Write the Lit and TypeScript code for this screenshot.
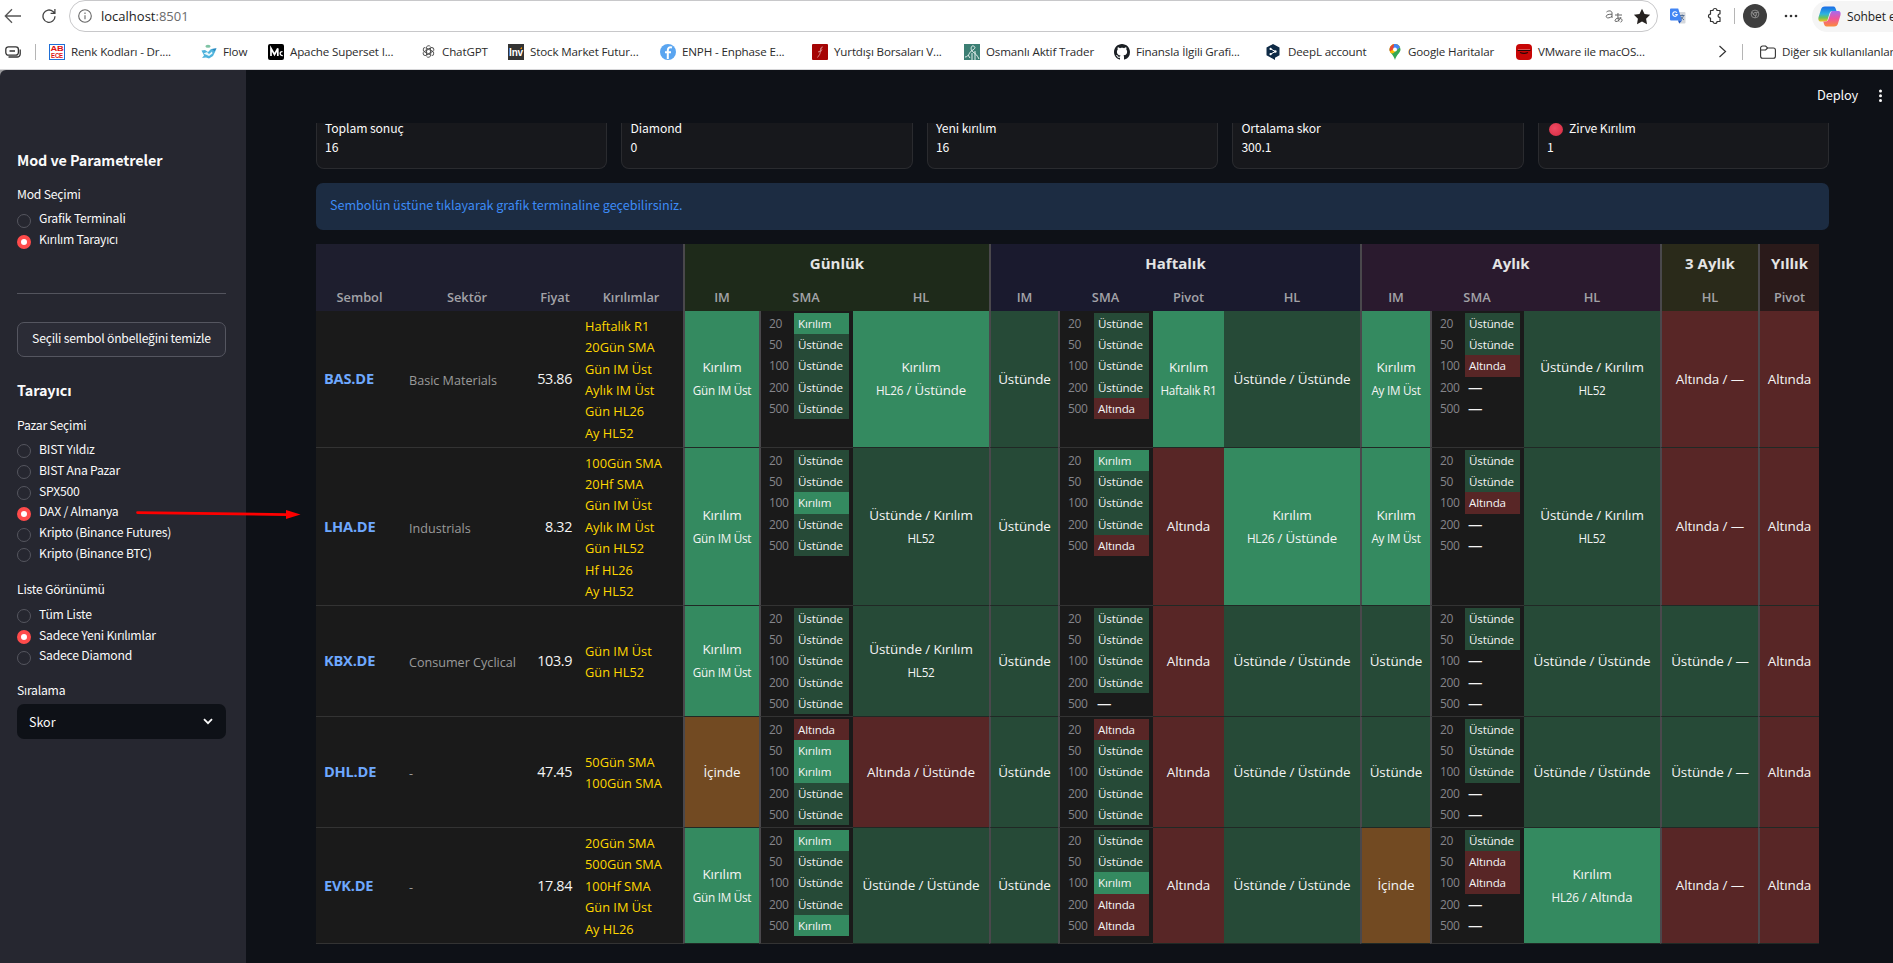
import { LitElement, html, css, svg, nothing, TemplateResult } from "lit";
import { customElement } from "lit/decorators.js";
import { classMap } from "lit/directives/class-map.js";

const ICONS: Record<string, TemplateResult> = {
  abece: svg`<svg width="16" height="16" viewBox="0 0 16 16"><rect x=".5" y=".5" width="15" height="15" fill="#fff" stroke="#1f6fd6"/><text x="8" y="7.4" font-size="7" font-weight="700" fill="#e01212" text-anchor="middle" textLength="13" lengthAdjust="spacingAndGlyphs">AB</text><text x="8" y="14" font-size="6.4" font-weight="700" fill="#e01212" text-anchor="middle" textLength="12" lengthAdjust="spacingAndGlyphs">ECE</text></svg>`,
  flow: svg`<svg width="16" height="16" viewBox="0 0 16 16"><ellipse cx="7" cy="2.3" rx="2.6" ry="1.5" fill="#7fc3a4"/><path d="M.5 6.5 4 6l3 2 3-3 5.500-.500L14 8l-2 4-4 2.500-3-1-4 .500 2-2.500z" fill="#4fb3dc"/><path d="M2.500 9.500 6 8l2 2 3-2.500.500 2L8 12z" fill="#e9f7fc"/><path d="M11 5l4.500-.8-2 3z" fill="#2c86bd"/></svg>`,
  medium: svg`<svg width="16" height="16" viewBox="0 0 16 16"><rect width="16" height="16" rx="2" fill="#000"/><path d="M3 12V4.500l3.500 6 3.300-6V12" fill="none" stroke="#fff" stroke-width="1.700"/><path d="M14.500 7.600c-3-.5-3.300 4.200.300 4" fill="none" stroke="#fff" stroke-width="1.300"/></svg>`,
  gpt: svg`<svg width="13" height="13" viewBox="0 0 13 13" fill="none" stroke="#4a4a4a" stroke-width=".9">${[0, 60, 120, 180, 240, 300].map(
    (r) => svg`<path transform="rotate(${r} 6.500 6.500)" d="M4.300 5.300V2.900a2.300 2.300 0 0 1 4.200-1.200M4.300 2.900 8.400 5.300"/>`)}</svg>`,
  inv: svg`<svg width="16" height="16" viewBox="0 0 16 16"><rect width="16" height="16" fill="#333"/><text x="8" y="12" font-size="10.500" font-weight="700" fill="#fff" text-anchor="middle" textLength="14" lengthAdjust="spacingAndGlyphs">Inv</text><path d="M12 4.500l2-1.500v2z" fill="#f90"/></svg>`,
  fin: svg`<svg width="16" height="16" viewBox="0 0 16 16"><circle cx="8" cy="8" r="8" fill="#5aa5f0"/><path d="M12 3.500c-3-1-4.200.7-4.200 3V15M5 8.200h6" fill="none" stroke="#fff" stroke-width="2"/></svg>`,
  redf: svg`<svg width="16" height="16" viewBox="0 0 16 16"><rect width="16" height="16" rx="1" fill="#a50505"/><path d="M10.800 3C7.500 3 9 7.500 7.600 10.500L5.500 13.500M6 8l4-1.500M8.800 4.500l1.500 1" fill="none" stroke="#e0a8a8" stroke-width=".8"/></svg>`,
  osm: svg`<svg width="16" height="16" viewBox="0 0 16 16"><rect width="16" height="16" fill="#3c7f74"/><path d="M1 13c4 0 4-5 7-6.500S12 3 9.500 2 6 6 9 8s4 3 6 7M8 16V9m3 7V7M4 11l2 3" fill="none" stroke="#e6f1ef" stroke-width="1"/></svg>`,
  github: svg`<svg width="16" height="16" viewBox="0 0 16 16"><path fill="#1b1f24" d="M8 0C3.580 0 0 3.580 0 8c0 3.540 2.290 6.530 5.470 7.590.4.070.55-.17.55-.38 0-.19-.01-.82-.01-1.490-2.010.37-2.530-.49-2.690-.94-.09-.23-.48-.94-.82-1.130-.28-.15-.68-.52-.01-.53.63-.01 1.080.58 1.230.82.72 1.210 1.870.87 2.330.66.07-.52.28-.87.51-1.070-1.780-.2-3.640-.89-3.640-3.950 0-.87.31-1.590.82-2.150-.08-.2-.36-1.020.08-2.120 0 0 .67-.21 2.200.82.64-.18 1.320-.27 2-.27s1.360.09 2 .27c1.530-1.040 2.200-.82 2.200-.82.44 1.100.16 1.920.08 2.120.51.56.82 1.270.82 2.150 0 3.070-1.870 3.750-3.650 3.950.29.25.54.73.54 1.480 0 1.070-.01 1.930-.01 2.200 0 .21.15.46.55.38A8 8 0 0 0 16 8c0-4.420-3.580-8-8-8z"/></svg>`,
  deepl: svg`<svg width="14" height="16" viewBox="0 0 14 16"><path d="M7 0l6.500 3.600v7.600L9 13.700 9 16l-2.500-1.400L.5 11.200V3.600z" fill="#0f2b46"/><path d="M4.500 4.800l4.800 2.700-4.800 2.700" fill="none" stroke="#fff" stroke-width="1"/><circle cx="4.600" cy="4.900" r="1.100" fill="#fff"/><circle cx="9.400" cy="7.500" r="1.200" fill="#fff"/><circle cx="4.600" cy="10.200" r="1.100" fill="#fff"/></svg>`,
  maps: svg`<svg width="12" height="16" viewBox="0 0 12 16"><path d="M6 0a5.500 5.500 0 0 1 5.500 5.600C11.500 9 7.200 11 6 16 4.800 11 .5 9 .5 5.600A5.500 5.500 0 0 1 6 0z" fill="#34a853"/><path d="M6 0a5.500 5.500 0 0 1 5 3.200L4 9.500 1.500 9C-.5 5 1 0 6 0z" fill="#fbbc04"/><path d="M6 0 5 5.500 1.500 3C2.500 1 4 0 6 0z" fill="#ea4335"/><path d="M5 0c3-.300 5 1 6 3.200L8 6 4.500 4z" fill="#4285f4"/><path d="M1.600 2.400 4.500 5 1 7.500C.3 5.500.5 4 1.600 2.400z" fill="#ea4335"/><circle cx="6" cy="5.500" r="2" fill="#fff"/></svg>`,
  vm: svg`<svg width="16" height="16" viewBox="0 0 16 16"><rect width="16" height="16" rx="4" fill="#c80606"/><path d="M1.500 6.500h13M4 8.600c3 1.200 5 1.200 8 0" stroke="#2a0505" stroke-width="1.100" fill="none"/><path d="M2 5.500h12" stroke="#e08a8a" stroke-width=".6"/></svg>`,
};

const BOOKMARKS: [string, string, number, number][] = [
  ["abece", "Renk Kodları - Dr....", 152, 6],
  ["flow", "Flow", 67, 6],
  ["medium", "Apache Superset I...", 154, 6],
  ["gpt", "ChatGPT", 86, 7],
  ["inv", "Stock Market Futur...", 152, 6],
  ["fin", "ENPH - Enphase E...", 152, 6],
  ["redf", "Yurtdışı Borsaları V...", 152, 6],
  ["osm", "Osmanlı Aktif Trader", 150, 6],
  ["github", "Finansla İlgili Grafi...", 152, 6],
  ["deepl", "DeepL account", 123, 8],
  ["maps", "Google Haritalar", 127, 7],
  ["vm", "VMware ile macOS...", 150, 6],
];

const UI = css`"Open Sans", "Noto Sans", sans-serif`;
const SOURCE = css`"Noto Sans CJK SC", "Open Sans", sans-serif`;

@customElement("browser-bar")
export class BrowserBar extends LitElement {
  static styles = css`
    :host { display: block; height: 69px; background: #fff; border-bottom: 1px solid #d6d6d8; overflow: hidden; color: #2b2b2b; font-family: ${UI}; }
    svg { display: block; flex: none; }
    svg text { font-family: "Liberation Sans", sans-serif; }
    .row { display: flex; align-items: center; white-space: nowrap; }
    .nav { height: 32px; }
    .back { margin-left: 4px; }
    .reload { margin-left: 20px; }
    .address { box-sizing: border-box; flex: none; width: 1589px; height: 32px; margin-left: 13px; border: 1px solid #c8c8ca; border-radius: 16px; padding: 0 6px 0 8px; display: flex; align-items: center; }
    .url { margin-left: 9px; font-size: 13px; letter-spacing: 0; color: #1c1c1c; }
    .url span { color: #6b6b6b; }
    .grow { flex: 1; }
    .sep { width: 1px; height: 16px; background: #b5b5b5; flex: none; }
    .avatar { flex: none; width: 24px; height: 24px; border-radius: 50%; background: #3e3e3e; display: flex; align-items: center; justify-content: center; }
    .chat { flex: none; width: 100px; height: 31px; border-radius: 16px 0 0 16px; background: #f5f5f5; display: flex; align-items: center; gap: 6px; padding-left: 6px; font-size: 12px; letter-spacing: -0.1px; color: #222; }
    .marks { height: 37px; padding-top: 1px; font-size: 11.600px; letter-spacing: -0.15px; }
    .item { display: flex; align-items: center; flex: none; box-sizing: border-box; }
  `;
  render() {
    return html`
      <div class="row nav">
        <svg class="back" width="18" height="16" viewBox="0 0 18 16" fill="none" stroke="#555" stroke-width="1.300"><path d="M17 8H1.500M8 1.300 1.300 8 8 14.700"/></svg>
        <svg class="reload" width="14" height="16" viewBox="0 0 14 16" fill="none" stroke="#444" stroke-width="1.300"><path d="M13 8.200A6 6.200 0 1 1 11 3.600L12.800 5.200M12.900 1v4.300H8.600"/></svg>
        <div class="address">
          <svg width="14" height="14" viewBox="0 0 14 14" fill="none" stroke="#666" stroke-width="1.100"><circle cx="7" cy="7" r="6.300"/><path d="M7 6.200v4M7 3.600v1.300"/></svg>
          <div class="url">localhost<span>:8501</span></div>
          <div class="grow"></div>
          <svg width="18" height="16" viewBox="0 0 18 16" fill="none" stroke="#666" stroke-width="1"><path d="M1.500 4C3.500 2.300 7 2.500 7 5v5M7 6.300C4 6 1.200 6.800 1.200 8.400 1.200 10.500 5 10.500 7 8M10 7h7M13 5c-.3 4 0 6 1 8.500M16 9c-1 3-3 4.500-5 4.500-2 0-1-3.500 3-3.500 3.500 0 4 3.500 1.500 4.200"/></svg>
          <svg width="18" height="17" viewBox="0 0 18 17" style="margin-left:10px"><path d="M9 .8l2.500 5.100 5.600.8-4 4 .9 5.600L9 13.600l-5 2.700.9-5.600-4-4 5.600-.8z" fill="#262220"/></svg>
        </div>
        <svg style="margin-left:12px" width="16" height="16" viewBox="0 0 16 16"><path d="M6 4h8.500a1 1 0 0 1 1 1v9.500a1 1 0 0 1-1 1H9z" fill="#d4d7dc"/><path d="M1 .5h7.200L12 12.500H1a1 1 0 0 1-1-1v-10a1 1 0 0 1 1-1z" fill="#4285f4"/><path d="M8 12.500h4L9.300 15.500z" fill="#1a56c4"/><path d="M7 4.800A2.300 2.300 0 1 0 7.300 6.500H5.200" fill="none" stroke="#fff" stroke-width="1.100"/><path d="M10 7.500h4.500M12.200 6.500v1M13.500 7.500c-.5 2-1.500 3-2.500 3.800M11 8.500c.7 1.500 1.600 2.500 3 3.500" fill="none" stroke="#4d6a92" stroke-width=".9"/></svg>
        <svg style="margin-left:20px" width="17" height="18" viewBox="0 0 17 18" fill="none" stroke="#333" stroke-width="1.200" stroke-linejoin="round"><path d="M4.500 3.500H7a2 2 0 0 1 4 0h3v3.300a1.800 1.800 0 1 0 0 3.800V14.500H11a2 2 0 0 1-4 0H4.500v-3.300a2 2 0 0 1 0-4z"/></svg>
        <div class="sep" style="margin-left:11px"></div>
        <div class="avatar" style="margin-left:8px"><svg width="10" height="10" viewBox="0 0 10 10" style="margin-bottom:5px" fill="none" stroke="#999" stroke-width=".8"><circle cx="5" cy="5" r="3.900"/><circle cx="5" cy="5" r="1.500"/><path d="M5 3.400h3.500M3.700 6 2 3M6.300 6 4.800 8.800"/></svg></div>
        <svg style="margin-left:17px" width="14" height="4" viewBox="0 0 14 4" fill="#333"><circle cx="2" cy="2" r="1.300"/><circle cx="7" cy="2" r="1.300"/><circle cx="12" cy="2" r="1.300"/></svg>
        <div class="chat" style="margin-left:14px">
          <svg width="23" height="21" viewBox="0 0 23 21"><defs><linearGradient id="a" x1="0" y1="0" x2="0" y2="1"><stop offset="0" stop-color="#1b6ce8"/><stop offset=".5" stop-color="#2db3e0"/><stop offset=".75" stop-color="#6cc35a"/><stop offset="1" stop-color="#f5c322"/></linearGradient><linearGradient id="b" x1="0" y1="0" x2="0" y2="1"><stop offset="0" stop-color="#a46bf0"/><stop offset=".5" stop-color="#f0559a"/><stop offset="1" stop-color="#fb8b3a"/></linearGradient></defs><path d="M7 .5h8.500c1.500 0 2 1.500 2.500 3l.5 1.500h-4c-2 0-2.500 1-3 2.500L9.500 14C9 15 8.500 15.500 7 15.500H3C.5 15.500 0 13.500.6 11L3 3.500C3.600 1.500 4.500.5 7 .5z" fill="url(#a)"/><path d="M16 20.500H8.500c-1.500 0-2-1-2.500-2.500L5.300 15.500H7.500c2 0 2.500-1 3-2.500L12.500 7c.5-1.500 1-2 2.500-2h5c2.500 0 3 2 2.400 4.500L20 17.500c-.6 2-1.500 3-4 3z" fill="url(#b)"/></svg>
          <span>Sohbet e</span>
        </div>
      </div>
      <div class="row marks">
        <svg style="margin-left:5px" width="16" height="12" viewBox="0 0 16 12" fill="none" stroke="#333" stroke-width="1.300"><rect x=".8" y=".8" width="12.600" height="8.400" rx="2.600"/><path d="M4.500 5h5.500M3.500 11h8.500a3 3 0 0 0 3.200-3V3.500"/></svg>
        <div class="sep" style="margin-left:14px"></div>
        <div style="width:13px;flex:none"></div>
        ${BOOKMARKS.map(([icon, text, w, gap]) => html`<div class="item" style="width:${w}px;gap:${gap}px">${ICONS[icon]}<span>${text}</span></div>`)}
        <svg style="margin-left:52px" width="9" height="13" viewBox="0 0 9 13" fill="none" stroke="#333" stroke-width="1.200"><path d="M1.500 1l6 5.500-6 5.500"/></svg>
        <div class="sep" style="margin-left:15px"></div>
        <svg style="margin:0 6px 0 17px" width="16" height="14" viewBox="0 0 16 14" fill="none" stroke="#333" stroke-width="1.100"><path d="M.6 3a2 2 0 0 1 2-2h3l2 2h5.800a2 2 0 0 1 2 2v6.300a2 2 0 0 1-2 2H2.600a2 2 0 0 1-2-2zM.6 5h5l2-2"/></svg>
        <span>Diğer sık kullanılanlar</span>
      </div>`;
  }
}

@customElement("side-panel")
export class SidePanel extends LitElement {
  static styles = css`
    :host { display: block; box-sizing: border-box; width: 246px; flex: none; padding: 78px 20px 0 17px; background: #262730; border-top-left-radius: 6px; color: #fafafa; font-family: ${SOURCE}; white-space: nowrap; }
    h2 { margin: 0; height: 24px; line-height: 24px; font-size: 14.400px; font-weight: 700; letter-spacing: -0.1px; }
    .label, .opt, .btn { font-size: 12.200px; letter-spacing: -0.22px; }
    .label { height: 20px; line-height: 20px; }
    .opts { padding-top: 4px; }
    .opt { display: flex; align-items: center; gap: 8px; height: 20.800px; line-height: 20px; }
    .dot { box-sizing: border-box; width: 14px; height: 14px; border-radius: 50%; border: 1px solid #55565f; background: #262730; margin-top: 5px; }
    .dot.on { border: 4.500px solid #ff4b4b; background: #fff; }
    .rule { height: 1px; background: #53545d; margin: 43px 0 28px; }
    .btn { box-sizing: border-box; height: 35px; border: 1px solid #555660; border-radius: 7px; background: #2b2c36; text-align: center; line-height: 31px; }
    .select { height: 35px; margin-top: 4px; border-radius: 7px; background: #0e1117; display: flex; align-items: center; justify-content: space-between; padding: 0 13px 0 12px; font-size: 12.500px; }
  `;
  private group(items: string[], on: number) {
    return html`<div class="opts">${items.map((t, i) => html`<div class="opt"><i class=${classMap({ dot: true, on: i === on })}></i><span>${t}</span></div>`)}</div>`;
  }
  render() {
    return html`
      <h2>Mod ve Parametreler</h2>
      <div class="label" style="margin-top:12px">Mod Seçimi</div>
      ${this.group(["Grafik Terminali", "Kırılım Tarayıcı"], 1)}
      <div class="rule"></div>
      <div class="btn">Seçili sembol önbelleğini temizle</div>
      <h2 style="margin-top:21px">Tarayıcı</h2>
      <div class="label" style="margin-top:13px">Pazar Seçimi</div>
      ${this.group(["BIST Yıldız", "BIST Ana Pazar", "SPX500", "DAX / Almanya", "Kripto (Binance Futures)", "Kripto (Binance BTC)"], 3)}
      <div class="label" style="margin-top:16px">Liste Görünümü</div>
      ${this.group(["Tüm Liste", "Sadece Yeni Kırılımlar", "Sadece Diamond"], 1)}
      <div class="label" style="margin-top:14px">Sıralama</div>
      <div class="select"><span>Skor</span><svg width="10" height="7" viewBox="0 0 10 7" fill="none" stroke="#fafafa" stroke-width="1.800"><path d="M1 1.200l4 4 4-4"/></svg></div>`;
  }
}

type State = "k" | "u" | "a" | "i" | "-";
interface Cell { s: State; t: string; sub?: string; tail?: string }
interface Row { sym: string; sector: string; price: string; hits: string[]; h: number; cells: (Cell | string)[] }

const NAMES: Record<string, string> = { k: "Kırılım", u: "Üstünde", a: "Altında", i: "İçinde", "-": "—" };
const c = (s: State, t = NAMES[s], sub?: string, tail?: string): Cell => ({ s, t, sub, tail });
const kg = c("k", "Kırılım", "Gün IM Üst");
const ka = c("k", "Kırılım", "Ay IM Üst");
const uu = c("u", "Üstünde / Üstünde");
const uk = c("u", "Üstünde / Kırılım", "HL52");
const kHL = c("k", "Kırılım", "HL26", "/ Üstünde");
const aDash = c("a", "Altında / —");
const uDash = c("u", "Üstünde / —");
const u = c("u"), a = c("a"), inside = c("i");

const ROWS: Row[] = [
  { sym: "BAS.DE", sector: "Basic Materials", price: "53.86", h: 137, hits: ["Haftalık R1", "20Gün SMA", "Gün IM Üst", "Aylık IM Üst", "Gün HL26", "Ay HL52"],
    cells: [kg, "kuuuu", kHL, u, "uuuua", c("k", "Kırılım", "Haftalık R1"), uu, ka, "uua--", uk, aDash, a] },
  { sym: "LHA.DE", sector: "Industrials", price: "8.32", h: 158, hits: ["100Gün SMA", "20Hf SMA", "Gün IM Üst", "Aylık IM Üst", "Gün HL52", "Hf HL26", "Ay HL52"],
    cells: [kg, "uukuu", uk, u, "kuuua", a, kHL, ka, "uua--", uk, aDash, a] },
  { sym: "KBX.DE", sector: "Consumer Cyclical", price: "103.9", h: 111, hits: ["Gün IM Üst", "Gün HL52"],
    cells: [kg, "uuuuu", uk, u, "uuuu-", a, uu, u, "uu---", uu, uDash, a] },
  { sym: "DHL.DE", sector: "-", price: "47.45", h: 111, hits: ["50Gün SMA", "100Gün SMA"],
    cells: [inside, "akkuu", c("a", "Altında / Üstünde"), u, "auuuu", a, uu, u, "uuu--", uu, uDash, a] },
  { sym: "EVK.DE", sector: "-", price: "17.84", h: 116, hits: ["20Gün SMA", "500Gün SMA", "100Hf SMA", "Gün IM Üst", "Ay HL26"],
    cells: [kg, "kuuuk", uu, u, "uukaa", a, uu, inside, "uaa--", c("k", "Kırılım", "HL26", "/ Altında"), aDash, a] },
];
const PERIODS = [20, 50, 100, 200, 500];
const DIVIDED = new Set([0, 1, 3, 4, 7, 8, 10, 11]);

@customElement("scan-table")
export class ScanTable extends LitElement {
  static styles = css`
    :host { display: block; width: 1503px; color: #f4f4f4; font-family: ${UI}; white-space: nowrap; }
    .grid { display: grid; grid-template-columns: 85px 130px 46px 106px 76px 94px 136px 69px 95px 71px 136px 70px 94px 136px 98px 61px; }
    .top { display: grid; grid-template-columns: 367px 306px 371px 300px 98px 61px; height: 39px; font-weight: 700; font-size: 15px; line-height: 39px; text-align: center; color: #e4e4e4; }
    .heads { height: 28px; font-size: 12.800px; font-weight: 600; line-height: 28px; text-align: center; color: #a3a3a8; }
    .base { background: #1e1e2e; padding-left: 2px; }
    .day { background: #1e2a1a; }
    .week { background: #1a1a2e; }
    .month { background: #2a1a2e; }
    .quarter { background: #2a2a1a; }
    .year { background: #2a1a1a; }
    .bar { border-left: 2px solid #4a484c; }
    .row > div { box-sizing: border-box; border-bottom: 1px solid #333; background-color: #1a1a1a; display: flex; align-items: center; min-width: 0; }
    .row .sym { padding: 0 0 2px 8px; font-size: 14.600px; font-weight: 700; letter-spacing: -0.2px; color: #6ea8fe; }
    .row .sector { padding: 3px 0 0 8px; font-size: 12.600px; letter-spacing: 0; color: #9a9a9a; }
    .row .price { justify-content: flex-end; padding: 0 5px 1px 0; font-size: 14.400px; letter-spacing: -0.38px; }
    .row .hits { padding: 2px 0 0 8px; font-size: 12.800px; line-height: 21.400px; color: #ffd700; }
    .row .cell { flex-direction: column; justify-content: center; font-size: 13.450px; letter-spacing: -0.08px; line-height: 22.800px; }
    .sub { font-size: 11.700px; letter-spacing: -0.24px; }
    .sub b { font-weight: 400; font-size: 13.200px; letter-spacing: -0.1px; }
    .row .sma { display: grid; grid-template-columns: 1fr 55px; grid-auto-rows: 21.200px; align-content: start; align-items: stretch; padding: 2px 4px 0 8px; font-size: 11.600px; line-height: 22px; }
    .n { color: #85858a; font-size: 12px; letter-spacing: -0.4px; }
    .chip { padding-left: 4px; letter-spacing: -0.15px; }
    .chip.none { font-size: 14.500px; padding-left: 3px; }
    .row .k, .chip.k { background-color: #348a60; }
    .row .u, .chip.u { background-color: #264a37; }
    .row .a, .chip.a { background-color: #582626; }
    .row .i { background-color: #724a22; }
    .row .cell { border-bottom-color: #202925; }
  `;
  private cell(v: Cell | string, i: number) {
    const bar = DIVIDED.has(i);
    if (typeof v === "string") {
      return html`<div class=${classMap({ sma: true, bar })}>${[...v].map((s, j) => html`<span class="n">${PERIODS[j]}</span><span class="chip ${s === "-" ? "none" : s}">${NAMES[s]}</span>`)}</div>`;
    }
    return html`<div class=${classMap({ cell: true, bar, [v.s]: true })}><span>${v.t}</span>${v.sub ? html`<span class="sub">${v.sub}${v.tail ? html`<b> ${v.tail}</b>` : nothing}</span>` : nothing}</div>`;
  }
  render() {
    const head = (cls: string, ...names: string[]) => names.map((n, i) => html`<div class=${classMap({ [cls]: true, bar: i === 0 && cls !== "base" })}>${n}</div>`);
    return html`
      <div class="top">
        <div class="base"></div><div class="day bar">Günlük</div><div class="week bar">Haftalık</div><div class="month bar">Aylık</div><div class="quarter bar">3 Aylık</div><div class="year bar">Yıllık</div>
      </div>
      <div class="grid heads">
        ${head("base", "Sembol", "Sektör", "Fiyat", "Kırılımlar")}${head("day", "IM", "SMA", "HL")}${head("week", "IM", "SMA", "Pivot", "HL")}${head("month", "IM", "SMA", "HL")}${head("quarter", "HL")}${head("year", "Pivot")}
      </div>
      ${ROWS.map((r) => html`<div class="grid row" style="height:${r.h}px">
        <div class="sym">${r.sym}</div><div class="sector">${r.sector}</div><div class="price">${r.price}</div>
        <div class="hits"><div>${r.hits.map((t) => html`<div>${t}</div>`)}</div></div>
        ${r.cells.map((v, i) => this.cell(v, i))}
      </div>`)}`;
  }
}

@customElement("app-root")
export class AppRoot extends LitElement {
  static styles = css`
    :host { display: flex; flex-direction: column; position: relative; width: 1893px; height: 963px; overflow: hidden; background: #0e1117; color: #fafafa; font-family: ${SOURCE}; }
    .page { flex: 1; display: flex; min-height: 0; background: linear-gradient(90deg, #9a9a9d 20px, #0e1117 20px); }
    main { flex: 1; display: flex; flex-direction: column; min-width: 0; background: #0e1117; }
    header { flex: none; height: 53px; display: flex; align-items: flex-start; justify-content: flex-end; padding-right: 10px; font-size: 12.800px; letter-spacing: -0.15px; line-height: 50px; }
    header svg { margin: 19px 0 0 20px; }
    .scroll { flex: 1; min-height: 0; padding: 0 64px 0 70px; }
    .metrics { display: grid; grid-template-columns: repeat(5, 1fr); gap: 14.400px; }
    .card { box-sizing: border-box; height: 46px; border: 1px solid #2a2b2f; border-top: 0; border-radius: 0 0 8px 8px; background: #17181c; padding: 0 8px; font-size: 12.200px; letter-spacing: -0.1px; white-space: nowrap; }
    .card div { display: flex; align-items: center; height: 20px; line-height: 20px; }
    .card .name { height: 14px; line-height: 10px; align-items: flex-start; }
    .ball { width: 14px; height: 13px; margin: 0 6px 0 2px; border-radius: 50%; background: radial-gradient(circle at 40% 40%, #ee4a62, #d52a40); }
    .info { box-sizing: border-box; height: 47px; margin: 14px 0; padding-left: 14px; border-radius: 7px; background: #1c2c42; color: #3d8bf5; font-size: 12.600px; letter-spacing: -0.02px; line-height: 44px; }
    .arrow { position: absolute; left: 136px; top: 508px; }
  `;
  render() {
    const cards: [string, string][] = [["Toplam sonuç", "16"], ["Diamond", "0"], ["Yeni kırılım", "16"], ["Ortalama skor", "300.1"], ["Zirve Kırılım", "1"]];
    return html`
      <browser-bar></browser-bar>
      <div class="page">
        <side-panel></side-panel>
        <main>
          <header><span>Deploy</span><svg width="5" height="14" viewBox="0 0 5 14" fill="#fafafa"><circle cx="2.500" cy="2" r="1.500"/><circle cx="2.500" cy="6.700" r="1.500"/><circle cx="2.500" cy="11.400" r="1.500"/></svg></header>
          <div class="scroll">
            <div class="metrics">${cards.map(([l, v], i) => html`<div class="card"><div class="name">${i === 4 ? html`<i class="ball"></i>` : nothing}${l}</div><div>${v}</div></div>`)}</div>
            <div class="info">Sembolün üstüne tıklayarak grafik terminaline geçebilirsiniz.</div>
            <scan-table></scan-table>
          </div>
        </main>
      </div>
      <svg class="arrow" width="166" height="14" viewBox="0 0 166 14"><path d="M1.500 4.600 151 6.600" stroke="#fe0000" stroke-width="2.700" stroke-linecap="round"/><path d="M150 2 164.500 6.600 150 11z" fill="#fe0000"/></svg>`;
  }
}
